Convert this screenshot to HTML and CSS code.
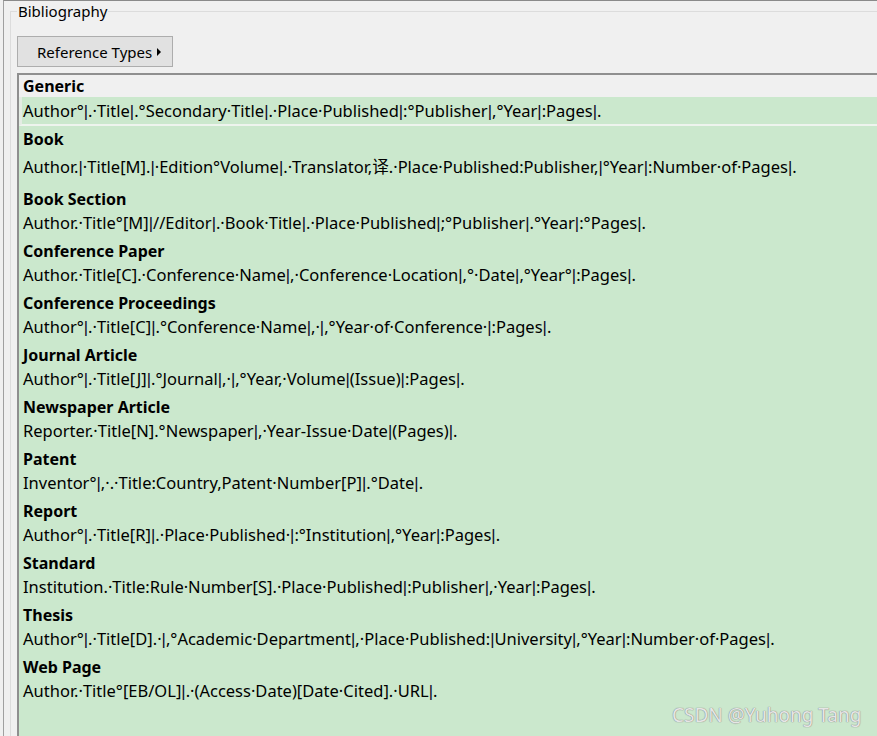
FILE: index.html
```html
<!DOCTYPE html>
<html>
<head>
<meta charset="utf-8">
<link rel="stylesheet" href="styles.css">
</head>
<body>
<div class="frame">
  <fieldset class="group">
    <legend class="group-title">Bibliography</legend>
    <div class="ref-btn"><span>Reference Types</span><span class="arrow"></span></div>
    <div class="listbox">
      <div class="entry generic">
        <div class="head">Generic</div>
        <div class="formula">Author°<span class="bar">|</span>.·Title<span class="bar">|</span>.°Secondary·Title<span class="bar">|</span>.·Place·Published<span class="bar">|</span>:°Publisher<span class="bar">|</span>,°Year<span class="bar">|</span>:Pages<span class="bar">|</span>.</div>
      </div>
      <div class="entry book">
        <div class="head">Book</div>
        <div class="formula">Author.<span class="bar">|</span>·Title[M].<span class="bar">|</span>·Edition°Volume<span class="bar">|</span>.·Translator,译.·Place·Published:Publisher,<span class="bar">|</span>°Year<span class="bar">|</span>:Number·of·Pages<span class="bar">|</span>.</div>
      </div>
      <div class="entry">
        <div class="head">Book Section</div>
        <div class="formula">Author.·Title°[M]<span class="bar">|</span>//Editor<span class="bar">|</span>.·Book·Title<span class="bar">|</span>.·Place·Published<span class="bar">|</span>;°Publisher<span class="bar">|</span>.°Year<span class="bar">|</span>:°Pages<span class="bar">|</span>.</div>
      </div>
      <div class="entry">
        <div class="head">Conference Paper</div>
        <div class="formula">Author.·Title[C].·Conference·Name<span class="bar">|</span>,·Conference·Location<span class="bar">|</span>,°·Date<span class="bar">|</span>,°Year°<span class="bar">|</span>:Pages<span class="bar">|</span>.</div>
      </div>
      <div class="entry">
        <div class="head">Conference Proceedings</div>
        <div class="formula">Author°<span class="bar">|</span>.·Title[C]<span class="bar">|</span>.°Conference·Name<span class="bar">|</span>,·<span class="bar">|</span>,°Year·of·Conference·<span class="bar">|</span>:Pages<span class="bar">|</span>.</div>
      </div>
      <div class="entry">
        <div class="head">Journal Article</div>
        <div class="formula">Author°<span class="bar">|</span>.·Title[J]<span class="bar">|</span>.°Journal<span class="bar">|</span>,·<span class="bar">|</span>,°Year,·Volume<span class="bar">|</span>(Issue)<span class="bar">|</span>:Pages<span class="bar">|</span>.</div>
      </div>
      <div class="entry">
        <div class="head">Newspaper Article</div>
        <div class="formula">Reporter.·Title[N].°Newspaper<span class="bar">|</span>,·Year-Issue·Date<span class="bar">|</span>(Pages)<span class="bar">|</span>.</div>
      </div>
      <div class="entry">
        <div class="head">Patent</div>
        <div class="formula">Inventor°<span class="bar">|</span>,·.·Title:Country,Patent·Number[P]<span class="bar">|</span>.°Date<span class="bar">|</span>.</div>
      </div>
      <div class="entry">
        <div class="head">Report</div>
        <div class="formula">Author°<span class="bar">|</span>.·Title[R]<span class="bar">|</span>.·Place·Published·<span class="bar">|</span>:°Institution<span class="bar">|</span>,°Year<span class="bar">|</span>:Pages<span class="bar">|</span>.</div>
      </div>
      <div class="entry">
        <div class="head">Standard</div>
        <div class="formula">Institution.·Title:Rule·Number[S].·Place·Published<span class="bar">|</span>:Publisher<span class="bar">|</span>,·Year<span class="bar">|</span>:Pages<span class="bar">|</span>.</div>
      </div>
      <div class="entry">
        <div class="head">Thesis</div>
        <div class="formula">Author°<span class="bar">|</span>.·Title[D].·<span class="bar">|</span>,°Academic·Department<span class="bar">|</span>,·Place·Published:<span class="bar">|</span>University<span class="bar">|</span>,°Year<span class="bar">|</span>:Number·of·Pages<span class="bar">|</span>.</div>
      </div>
      <div class="entry">
        <div class="head">Web Page</div>
        <div class="formula">Author.·Title°[EB/OL]<span class="bar">|</span>.·(Access·Date)[Date·Cited].·URL<span class="bar">|</span>.</div>
      </div>
    </div>
  </fieldset>
</div>
<div class="watermark">CSDN @Yuhong Tang</div>
</body>
</html>
```
FILE: styles.css
```css
html, body {
  margin: 0;
  padding: 0;
  width: 877px;
  height: 736px;
  overflow: hidden;
  background: #f0f0f0;
  font-family: "Noto Sans", "Open Sans", "Noto Sans CJK SC", sans-serif;
  color: #000;
}

.frame {
  margin-left: 3px;
  height: 735px;
  border-top: 1px solid #8a8a8a;
  border-left: 1px solid #a0a0a0;
  overflow: hidden;
}

.group {
  margin: 0 0 0 6px;
  padding: 0 0 0 6px;
  width: 900px;
  height: 760px;
  border: 1px solid #dcdcdc;
  border-right: none;
  border-bottom: none;
  box-sizing: border-box;
}

.group-title {
  padding: 0 1px;
  font-size: 15px;
  line-height: 20px;
  color: #000;
}

.ref-btn {
  margin-top: 15px;
  width: 156px;
  height: 31px;
  box-sizing: border-box;
  border: 1px solid #adadad;
  background: #e1e1e1;
  display: flex;
  align-items: center;
  padding-left: 19px;
  font-size: 15px;
}

.arrow {
  margin-left: 5px;
  width: 0;
  height: 0;
  border-left: 4px solid #000;
  border-top: 4px solid transparent;
  border-bottom: 4px solid transparent;
}

.listbox {
  margin-top: 6px;
  border-top: 2px solid #8f8f8f;
  border-left: 2px solid #8f8f8f;
  background: #cbe8cd;
  height: 700px;
}

.head {
  height: 22px;
  line-height: 22px;
  padding-left: 4px;
  font-weight: bold;
  font-size: 16px;
}

.formula {
  line-height: 26px;
  height: 26px;
  padding-left: 4px;
  padding-bottom: 4px;
  font-size: 16.5px;
  white-space: nowrap;
}

.bar {
  font-family: "Liberation Sans", sans-serif;
  color: #0a0a28;
}

.generic .head {
  background: #f0f0f0;
}

.generic .formula {
  padding: 1px 0 0 1px;
  border-left: 3px solid #e4ece4;
  border-bottom: 2px solid #eef4ee;
  margin-bottom: 2px;
}

.book .formula {
  padding-top: 4px;
  padding-bottom: 8px;
}

.watermark {
  position: absolute;
  left: 672px;
  top: 702px;
  font-family: "Noto Sans", sans-serif;
  font-size: 19px;
  color: #e6e6e6;
  text-shadow: 0 0 1px #7a7a7a, 0 0 1px #9a9a9a;
}
```
